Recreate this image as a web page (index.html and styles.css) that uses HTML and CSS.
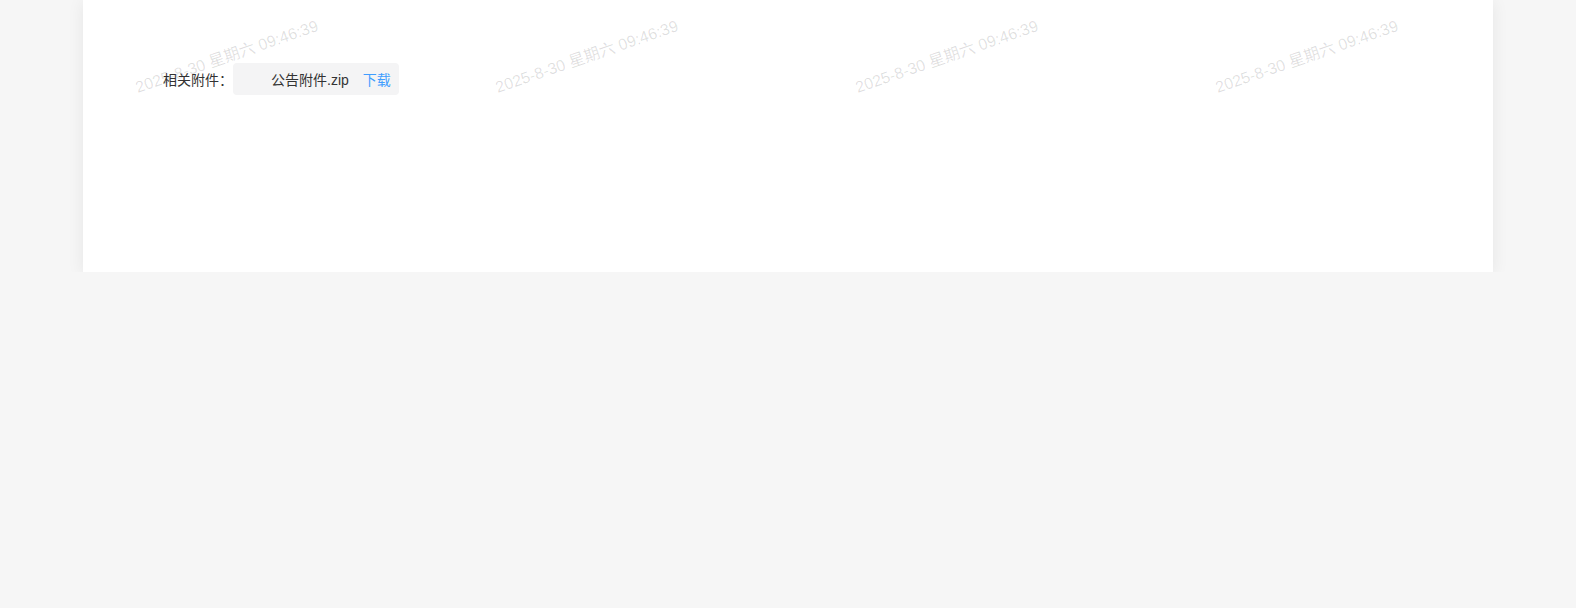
FILE: index.html
```html
<!DOCTYPE html>
<html lang="zh">
<head>
<meta charset="utf-8">
<title>公告详情</title>
<link rel="stylesheet" href="styles.css">
</head>
<body>
<div class="card">
  <div class="attach-row">
    <span class="attach-label">相关附件：</span>
    <div class="attach-box">
      <span class="attach-name">公告附件.zip</span>
      <a class="attach-dl" href="#">下载</a>
    </div>
  </div>
  <div class="wm wm1">2025-8-30 星期六 09:46:39</div>
  <div class="wm wm2">2025-8-30 星期六 09:46:39</div>
  <div class="wm wm3">2025-8-30 星期六 09:46:39</div>
  <div class="wm wm4">2025-8-30 星期六 09:46:39</div>
</div>
</body>
</html>
```

FILE: styles.css
```css
html, body {
  margin: 0;
  padding: 0;
  background: #f6f6f6;
  font-family: "Liberation Sans", "Noto Sans CJK SC", sans-serif;
  color: #333;
}
.card {
  position: relative;
  margin: 0 auto;
  width: 1410px;
  height: 272px;
  box-sizing: border-box;
  padding: 63px 0 0 80px;
  background: #fff;
  box-shadow: 0 2px 16px rgba(0, 0, 0, 0.07);
}
.attach-row {
  display: flex;
  align-items: center;
  height: 32px;
}
.attach-label {
  font-size: 14px;
  color: #333;
  width: 70px;
}
.attach-box {
  display: flex;
  align-items: center;
  height: 32px;
  box-sizing: border-box;
  padding: 0 8px 0 38px;
  background: #f4f4f5;
  border-radius: 4px;
  font-size: 14px;
}
.attach-name {
  color: #333;
}
.attach-dl {
  margin-left: 14px;
  color: #409eff;
  text-decoration: none;
}
.wm {
  position: absolute;
  top: 47px;
  width: 200px;
  text-align: center;
  font-size: 16px;
  line-height: 20px;
  color: rgba(0, 0, 0, 0.13);
  white-space: nowrap;
  transform: rotate(-19deg);
  pointer-events: none;
}
.wm1 { left: 44px; }
.wm2 { left: 404px; }
.wm3 { left: 764px; }
.wm4 { left: 1124px; }
```
